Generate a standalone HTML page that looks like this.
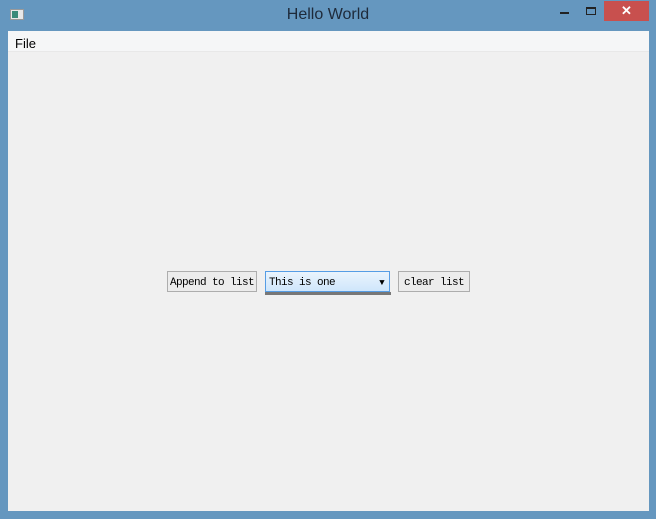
<!DOCTYPE html>
<html><head><style>
*{margin:0;padding:0;box-sizing:border-box}
body{width:656px;height:519px;background:#6597bf;position:relative;overflow:hidden;font-family:"Liberation Sans",sans-serif}
.title{position:absolute;top:6px;left:0;width:656px;text-align:center;font-size:16px;color:#1e2a3a}
.close{position:absolute;left:604px;top:1px;width:45px;height:20px;background:#c8504e;color:#fff;text-align:center;font-size:13px;font-weight:bold;line-height:20px}
.client{position:absolute;left:8px;top:31px;width:641px;height:480px;background:#f0f0f0}
.menu{height:21px;background:#f5f6f7;border-bottom:1px solid #e8e8e8;font-size:13px;padding:5px 0 0 7px;color:#000}
.btn{position:absolute;top:271px;height:21px;border:1px solid #adadad;background:#ececec;font-family:"Liberation Mono","DejaVu Sans Mono",monospace;font-size:11px;letter-spacing:-0.6px;line-height:22px;text-align:center;color:#000;white-space:nowrap}
.combo{position:absolute;left:265px;top:271px;width:125px;height:21px;border:1px solid #569de5;background:linear-gradient(#eaf4fd,#cfe6fb);font-family:"Liberation Mono",monospace;font-size:11px;letter-spacing:-0.6px;line-height:22px;padding-left:3px;white-space:nowrap}
.under{position:absolute;left:265px;top:292px;width:126px;height:3px;background:#777}
</style></head><body>
<div style="position:absolute;left:10px;top:9px;width:14px;height:11px;background:#e8e8e8;border:1px solid #999"><div style="width:6px;height:7px;margin:1px;background:#3a8a7a"></div></div>
<div class="title">Hello World</div>
<div style="position:absolute;left:560px;top:12px;width:9px;height:2px;background:#222"></div>
<div style="position:absolute;left:586px;top:7px;width:10px;height:8px;border:1px solid #222;border-top-width:2px"></div>
<div class="close">✕</div>
<div class="client"><div class="menu">File</div></div>
<div class="btn" style="left:167px;width:90px">Append to list</div>
<div class="combo">This is one<span style="position:absolute;right:5px;top:0;font-size:9px">▼</span></div>
<div class="under"></div>
<div class="btn" style="left:398px;width:72px">clear list</div>
</body></html>
